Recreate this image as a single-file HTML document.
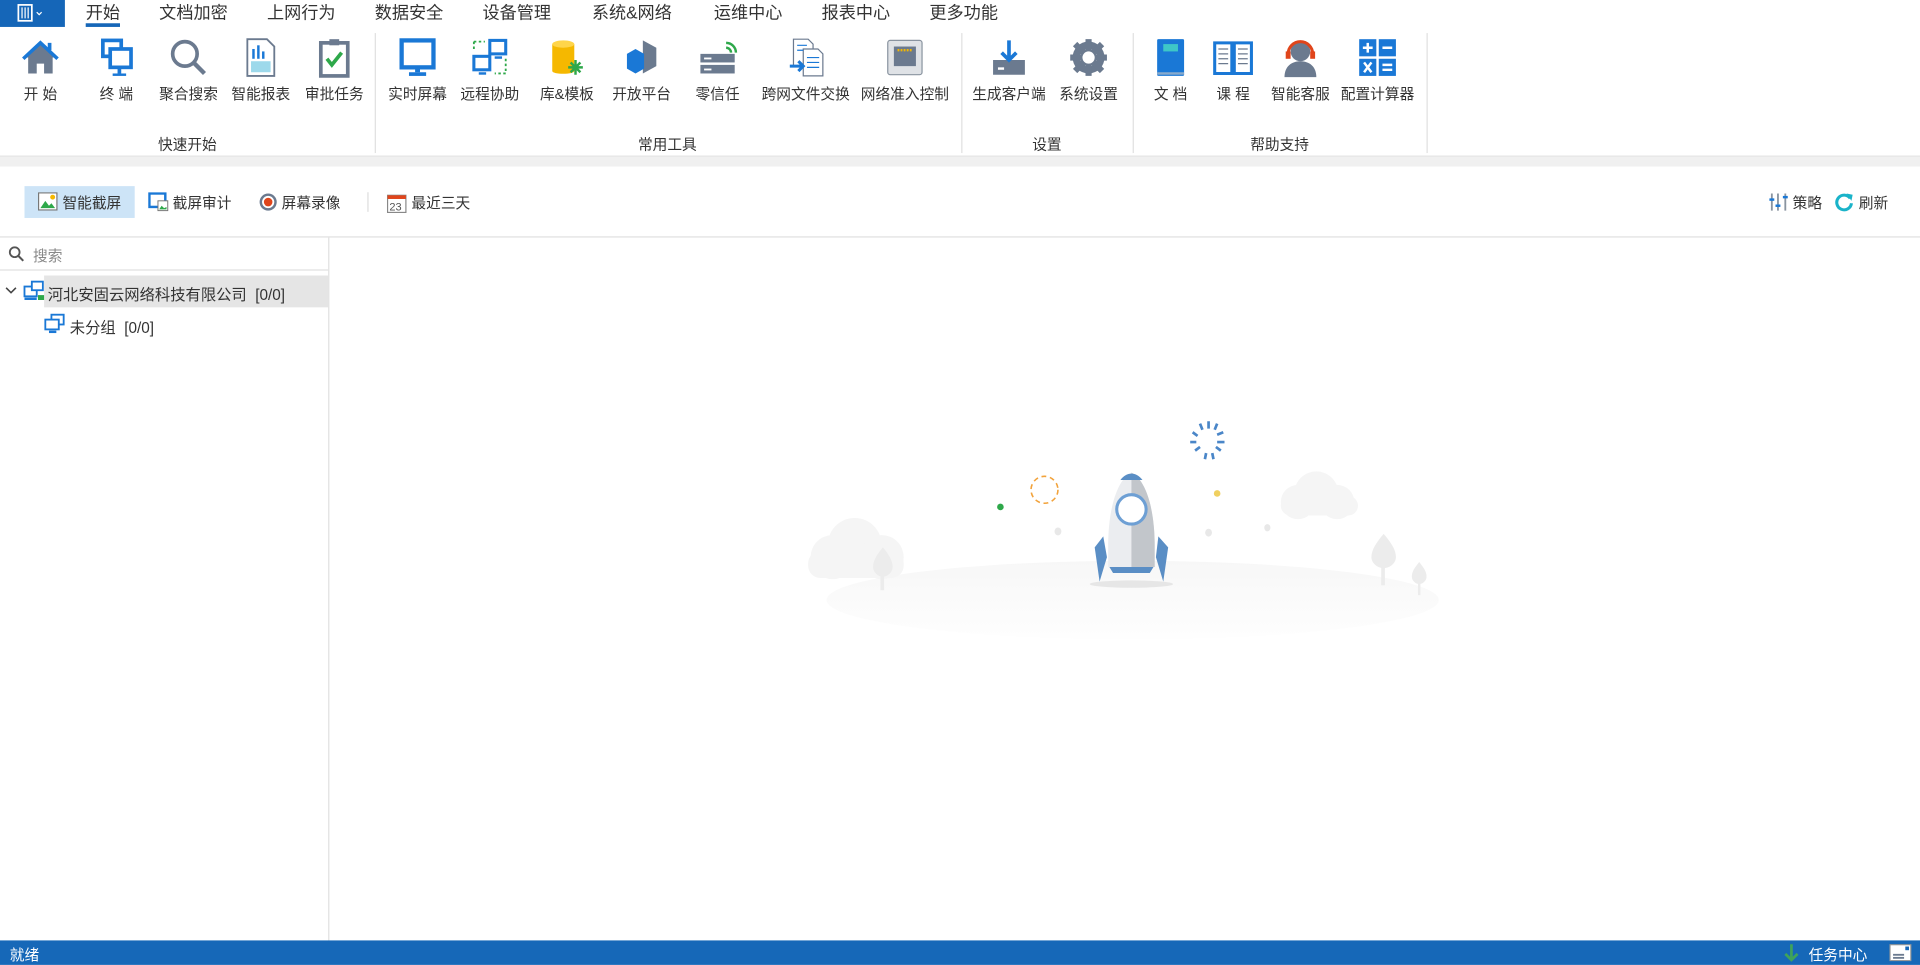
<!DOCTYPE html>
<html><head><meta charset="utf-8">
<style>
*{margin:0;padding:0;box-sizing:border-box}
html,body{width:1920px;height:965px;overflow:hidden;background:#fff}
#w{position:absolute;left:0;top:0;width:1568px;height:788px;transform:scale(1.22449);transform-origin:0 0;font-family:"Liberation Sans","Noto Sans CJK SC",sans-serif;color:#333;font-size:12px}
.a{position:absolute}
.tab{position:absolute;top:0px;font-size:14px;color:#333;transform:translateX(-50%);white-space:nowrap}
.it{position:absolute;top:30px;width:60px;margin-left:-30px;text-align:center}
.it svg{display:block;margin:0 auto;width:34px;height:34px}
.it span{display:block;margin-top:4px;font-size:12px;color:#333;white-space:nowrap}
.gl{position:absolute;top:109px;transform:translateX(-50%);font-size:12px;color:#333}
.sep{position:absolute;top:27px;width:1px;height:98px;background:#e0e0e0}
</style></head><body><div id="w">
<div class="a" style="left:0;top:0;width:53px;height:22px;background:#1566b8"></div>
<svg class="a" style="left:14px;top:3px" width="26" height="16"><rect x="1" y="1" width="11" height="13" fill="none" stroke="#fff" stroke-width="1.4"/><line x1="4" y1="3" x2="4" y2="12" stroke="#fff"/><line x1="6.5" y1="3" x2="6.5" y2="12" stroke="#fff"/><line x1="9" y1="3" x2="9" y2="12" stroke="#fff"/><path d="M16 7l2 2 2-2" stroke="#fff" fill="none"/></svg>
<div class="tab" style="left:84px">开始</div>
<div class="a" style="left:70px;top:19px;width:28px;height:3px;background:#1566b8"></div>
<div class="tab" style="left:158px">文档加密</div>
<div class="tab" style="left:246px">上网行为</div>
<div class="tab" style="left:334px">数据安全</div>
<div class="tab" style="left:422px">设备管理</div>
<div class="tab" style="left:516px">系统&amp;网络</div>
<div class="tab" style="left:611px">运维中心</div>
<div class="tab" style="left:699px">报表中心</div>
<div class="tab" style="left:787px">更多功能</div>

<div class="sep" style="left:306px"></div><div class="sep" style="left:785px"></div><div class="sep" style="left:925px"></div><div class="sep" style="left:1165px"></div>
<div class="it" style="left:33px"><svg viewBox="0 0 34 34"><path d="M17 4L3 17h4v13h7v-8h6v8h7V17h4z" fill="#6b7a8f"/><path d="M17 3L2 17l2 2 13-12 13 12 2-2z" fill="#1a78d6"/><rect x="23" y="5" width="3" height="6" fill="#1a78d6"/></svg><span>开 始</span></div>
<div class="it" style="left:95px"><svg viewBox="0 0 34 34"><rect x="6" y="3" width="15" height="13" fill="none" stroke="#1a78d6" stroke-width="3"/><rect x="12" y="10" width="17" height="15" fill="#fff" stroke="#1a78d6" stroke-width="3"/><rect x="18" y="26" width="3" height="4" fill="#1a78d6"/><rect x="14" y="30" width="11" height="2" fill="#1a78d6"/></svg><span>终 端</span></div>
<div class="it" style="left:154px"><svg viewBox="0 0 34 34"><circle cx="14" cy="14" r="10" fill="none" stroke="#6b7a8f" stroke-width="3"/><path d="M21 21l9 9" stroke="#6b7a8f" stroke-width="3.5"/></svg><span>聚合搜索</span></div>
<div class="it" style="left:213px"><svg viewBox="0 0 34 34"><path d="M6 2h16l6 6v24H6z" fill="#fff" stroke="#6b7a8f" stroke-width="1.5"/><rect x="10" y="10" width="2" height="8" fill="#1a78d6"/><rect x="14" y="7" width="2" height="11" fill="#1a78d6"/><rect x="18" y="12" width="2" height="6" fill="#1a78d6"/><rect x="9" y="20" width="16" height="9" fill="#5bc0de" opacity=".6"/></svg><span>智能报表</span></div>
<div class="it" style="left:273px"><svg viewBox="0 0 34 34"><rect x="6" y="5" width="22" height="27" fill="#fff" stroke="#6b7a8f" stroke-width="3"/><rect x="13" y="2" width="8" height="5" fill="#6b7a8f"/><path d="M11 18l4 5 8-10" fill="none" stroke="#2ea84a" stroke-width="3"/></svg><span>审批任务</span></div>
<div class="it" style="left:341px"><svg viewBox="0 0 34 34"><rect x="4" y="3" width="26" height="22" fill="none" stroke="#1a78d6" stroke-width="3.5"/><rect x="15" y="25" width="4" height="4" fill="#1a78d6"/><rect x="10" y="29" width="14" height="3" fill="#1a78d6"/></svg><span>实时屏幕</span></div>
<div class="it" style="left:400px"><svg viewBox="0 0 34 34"><rect x="17" y="3" width="13" height="11" fill="none" stroke="#1a78d6" stroke-width="2.5"/><rect x="4" y="16" width="13" height="11" fill="none" stroke="#1a78d6" stroke-width="2.5"/><path d="M4 4h9M4 4v8M30 18v12h-9" stroke="#2ea84a" stroke-dasharray="2 2" fill="none" stroke-width="1.5"/><rect x="8" y="29" width="6" height="2" fill="#1a78d6"/><rect x="21" y="16" width="6" height="2" fill="#1a78d6"/></svg><span>远程协助</span></div>
<div class="it" style="left:463px"><svg viewBox="0 0 34 34"><path d="M5 6v22c0 3 18 3 18 0V6z" fill="#f5b800"/><ellipse cx="14" cy="6" rx="9" ry="3" fill="#ffd54a"/><path d="M24 19v12M18 25h12M20 21l8 8M28 21l-8 8" stroke="#2ea84a" stroke-width="2"/></svg><span>库&amp;模板</span></div>
<div class="it" style="left:524px"><svg viewBox="0 0 34 34"><path d="M18 3l11 6v15l-11 6z" fill="#6b7a8f"/><path d="M5 14l7-4 7 4v12l-7 4-7-4z" fill="#1a78d6"/></svg><span>开放平台</span></div>
<div class="it" style="left:586px"><svg viewBox="0 0 34 34"><rect x="3" y="14" width="28" height="7" fill="#6b7a8f"/><rect x="3" y="23" width="28" height="7" fill="#6b7a8f"/><rect x="6" y="17" width="6" height="1.5" fill="#fff"/><rect x="6" y="26" width="6" height="1.5" fill="#fff"/><path d="M24 9a4 4 0 014 4M24 5a8 8 0 018 8" stroke="#2ea84a" stroke-width="2" fill="none"/></svg><span>零信任</span></div>
<div class="it" style="left:658px;width:80px;margin-left:-40px"><svg viewBox="0 0 34 34"><path d="M7 2h12l4 4v18H7z" fill="#fff" stroke="#6b7a8f"/><path d="M15 10h12l4 4v18H15z" fill="#fff" stroke="#6b7a8f"/><path d="M18 17h10M18 21h10M18 25h10M10 7h8M10 11h5" stroke="#1a78d6"/><path d="M4 24h11M11 20l4 4-4 4" stroke="#1a78d6" stroke-width="2.5" fill="none"/></svg><span>跨网文件交换</span></div>
<div class="it" style="left:739px;width:80px;margin-left:-40px"><svg viewBox="0 0 34 34"><rect x="3" y="3" width="28" height="28" rx="2" fill="#dfe2e6" stroke="#8a94a0"/><rect x="8" y="8" width="18" height="16" fill="#6b7a8f"/><path d="M11 11h12" stroke="#f5b800" stroke-width="2" stroke-dasharray="1.5 1"/></svg><span>网络准入控制</span></div>
<div class="it" style="left:824px;width:70px;margin-left:-35px"><svg viewBox="0 0 34 34"><path d="M4 19h26v12H4z" fill="#6b7a8f"/><rect x="8" y="25" width="5" height="2" fill="#fff"/><path d="M17 3v16M11 13l6 6 6-6" stroke="#1a78d6" stroke-width="3" fill="none"/></svg><span>生成客户端</span></div>
<div class="it" style="left:889px"><svg viewBox="0 0 34 34"><circle cx="17" cy="17" r="10" fill="none" stroke="#6b7a8f" stroke-width="6"/><path d="M17 2v30M2 17h30M6 6l22 22M28 6L6 28" stroke="#6b7a8f" stroke-width="5"/><circle cx="17" cy="17" r="5" fill="#fff"/></svg><span>系统设置</span></div>
<div class="it" style="left:956px"><svg viewBox="0 0 34 34"><rect x="6" y="2" width="22" height="30" rx="1" fill="#1a78d6"/><rect x="11" y="6" width="12" height="6" fill="#3ec7c7"/><rect x="6" y="29" width="22" height="2" fill="#8ac"/></svg><span>文 档</span></div>
<div class="it" style="left:1007px"><svg viewBox="0 0 34 34"><path d="M2 5h14v25H2zM18 5h14v25H18z" fill="#fff" stroke="#1a78d6" stroke-width="2.5"/><path d="M5 10h8M5 14h8M5 18h8M5 22h8M21 10h8M21 14h8M21 18h8M21 22h8" stroke="#6b7a8f"/></svg><span>课 程</span></div>
<div class="it" style="left:1062px"><svg viewBox="0 0 34 34"><circle cx="17" cy="12" r="8" fill="#6b7a8f"/><path d="M4 33c0-9 6-13 13-13s13 4 13 13z" fill="#6b7a8f"/><path d="M7 14a10 10 0 0120 0" stroke="#e0451b" stroke-width="2.5" fill="none"/><rect x="5" y="12" width="4" height="6" fill="#e0451b"/><rect x="25" y="12" width="4" height="6" fill="#e0451b"/></svg><span>智能客服</span></div>
<div class="it" style="left:1125px;width:70px;margin-left:-35px"><svg viewBox="0 0 34 34"><rect x="2" y="2" width="14" height="14" fill="#1a78d6"/><rect x="18" y="2" width="14" height="14" fill="#1a78d6"/><rect x="2" y="18" width="14" height="14" fill="#1a78d6"/><rect x="18" y="18" width="14" height="14" fill="#1a78d6"/><path d="M5 9h8M9 5v8M21 9h8M6 21l6 8M12 21l-6 8M21 23h8M21 27h8" stroke="#fff" stroke-width="2"/></svg><span>配置计算器</span></div>
<div class="gl" style="left:153px">快速开始</div>
<div class="gl" style="left:545px">常用工具</div>
<div class="gl" style="left:855px">设置</div>
<div class="gl" style="left:1045px">帮助支持</div>
<div class="a" style="left:0;top:127px;width:1568px;height:9px;background:#f0f0f0;border-top:1px solid #e6e6e6"></div>

<div class="a" style="left:20px;top:152px;width:90px;height:26px;background:#cde4f7"></div>
<svg class="a" style="left:31px;top:157px" width="16" height="15"><rect x=".5" y=".5" width="15" height="14" fill="#fff" stroke="#777"/><path d="M2 13l4-6 3 4 2-2 3 4z" fill="#2ea84a"/><circle cx="12" cy="4" r="2" fill="#f5b800"/></svg>
<div class="a" style="left:51px;top:157px;font-size:12px">智能截屏</div>
<svg class="a" style="left:121px;top:157px" width="17" height="16"><rect x="1" y="1" width="13" height="11" fill="none" stroke="#1a78d6" stroke-width="2"/><rect x="8" y="7" width="8" height="8" fill="#fff" stroke="#777" stroke-width=".8"/><path d="M9 14l2-3 2 2 2-1v2z" fill="#2ea84a"/></svg>
<div class="a" style="left:141px;top:157px">截屏审计</div>
<svg class="a" style="left:211px;top:157px" width="16" height="16"><circle cx="8" cy="8" r="7" fill="#6b7a8f"/><circle cx="8" cy="8" r="5" fill="#fff"/><circle cx="8" cy="8" r="3.5" fill="#e0451b"/></svg>
<div class="a" style="left:230px;top:157px">屏幕录像</div>
<div class="a" style="left:300px;top:157px;width:1px;height:16px;background:#ddd"></div>
<svg class="a" style="left:316px;top:157px" width="16" height="17"><rect x=".5" y="2.5" width="15" height="14" fill="#fff" stroke="#888"/><rect x=".5" y="2.5" width="15" height="3" fill="#e0451b"/><text x="2" y="15" font-size="9" fill="#555" font-family="Liberation Sans">23</text></svg>
<div class="a" style="left:336px;top:157px">最近三天</div>
<svg class="a" style="left:1444px;top:157px" width="17" height="16"><path d="M3 1v14M8 1v14M14 1v14" stroke="#8a94a0" stroke-width="1.5"/><rect x="1" y="5" width="4" height="2" fill="#1a78d6"/><rect x="6" y="10" width="4" height="2" fill="#1a78d6"/><rect x="12" y="3" width="4" height="2" fill="#1a78d6"/></svg>
<div class="a" style="left:1464px;top:157px">策略</div>
<svg class="a" style="left:1498px;top:157px" width="16" height="16"><path d="M13 5A6 6 0 1 0 14 9" stroke="#1ab3c9" stroke-width="2.5" fill="none"/><path d="M10 1l5 1-1 5z" fill="#1ab3c9"/></svg>
<div class="a" style="left:1518px;top:157px">刷新</div>
<div class="a" style="left:0;top:193px;width:1568px;height:1px;background:#e0e0e0"></div>

<div class="a" style="left:268px;top:194px;width:1px;height:574px;background:#e0e0e0"></div>
<svg class="a" style="left:7px;top:201px" width="13" height="13"><circle cx="5" cy="5" r="4" fill="none" stroke="#555" stroke-width="1.5"/><path d="M8 8l4 4" stroke="#555" stroke-width="1.7"/></svg>
<div class="a" style="left:27px;top:200px;color:#888">搜索</div>
<div class="a" style="left:0;top:220px;width:268px;height:1px;background:#e0e0e0"></div>
<div class="a" style="left:36px;top:225px;width:232px;height:26px;background:#e5e5e5"></div>
<svg class="a" style="left:4px;top:234px" width="10" height="8"><path d="M1 1l4 4 4-4" stroke="#444" stroke-width="1.3" fill="none"/></svg>
<svg class="a" style="left:19px;top:229px" width="18" height="17"><rect x="1" y="5" width="10" height="8" fill="#fff" stroke="#1a78d6" stroke-width="1.5"/><rect x="7" y="1" width="9" height="7" fill="#fff" stroke="#1a78d6" stroke-width="1.5"/><rect x="1" y="14" width="10" height="2" fill="#1a78d6"/><rect x="12" y="12" width="5" height="4" fill="#2ea84a"/></svg>
<div class="a" style="left:39px;top:230px;font-size:12.5px">河北安固云网络科技有限公司&nbsp; [0/0]</div>
<svg class="a" style="left:36px;top:256px" width="18" height="17"><rect x="6" y="1" width="10" height="8" fill="#fff" stroke="#1a78d6" stroke-width="1.5"/><rect x="1" y="5" width="11" height="8" fill="#fff" stroke="#1a78d6" stroke-width="1.5"/><rect x="4" y="14" width="6" height="2" fill="#1a78d6"/></svg>
<div class="a" style="left:57px;top:257px;font-size:12.5px">未分组&nbsp; [0/0]</div>

<svg class="a" style="left:640px;top:330px" width="550" height="200" viewBox="640 330 550 200">
<defs><linearGradient id="g" x1="0" y1="0" x2="0" y2="1"><stop offset="0" stop-color="#f7f7f7"/><stop offset="1" stop-color="#fefefe"/></linearGradient></defs>
<ellipse cx="925" cy="490" rx="250" ry="32" fill="url(#g)"/>
<g fill="#f5f5f5"><circle cx="698" cy="445" r="22"/><circle cx="680" cy="455" r="18"/><circle cx="720" cy="455" r="18"/><rect x="660" y="450" width="78" height="22" rx="10"/>
<circle cx="1075" cy="403" r="18"/><circle cx="1060" cy="410" r="14"/><circle cx="1092" cy="410" r="14"/><rect x="1046" y="405" width="63" height="16" rx="8"/></g>
<g fill="#ececec"><path d="M721 447c-6 7-8 12-8 16 0 4 4 8 8 8s8-4 8-8c0-4-2-9-8-16z"/><rect x="719" y="465" width="3" height="17"/>
<path d="M1130 436c-6 7-10 13-10 19 0 5 5 9 10 9s10-4 10-9c0-6-4-12-10-19z"/><rect x="1128" y="460" width="3" height="18"/>
<path d="M1159 459c-4 5-6 8-6 12 0 3 3 6 6 6s6-3 6-6c0-4-2-7-6-12z"/><rect x="1158" y="473" width="2" height="13"/></g>
<ellipse cx="924" cy="477" rx="34" ry="3" fill="#e6e6e6"/>
<path d="M901 438l-7 9 4 28 6-20z" fill="#5a8ec5"/><path d="M946 438l8 9-4 28-6-20z" fill="#5a8ec5"/>
<path d="M924 386c-12 6-19 30-19 60v17h38v-17c0-30-7-54-19-60z" fill="#ebedf0"/>
<path d="M924 386c12 6 19 30 19 60v17h-19z" fill="#c2c6cb"/>
<path d="M915 392c5-7 13-7 18 0z" fill="#5a8ec5"/>
<path d="M906 463h36l-3 5h-30z" fill="#5a8ec5"/>
<circle cx="924" cy="416" r="12" fill="#fff" stroke="#6d9fd4" stroke-width="2.5"/>
<circle cx="853" cy="400" r="11" fill="none" stroke="#f2a33c" stroke-width="1.3" stroke-dasharray="4 3"/>
<circle cx="817" cy="414" r="2.7" fill="#2ea84a"/><circle cx="994" cy="403" r="2.7" fill="#f0d060"/>
<ellipse cx="864" cy="434" rx="2.8" ry="3.2" fill="#e8e8e8"/><ellipse cx="987" cy="435" rx="2.8" ry="3.2" fill="#e8e8e8"/><ellipse cx="1035" cy="431" rx="2.5" ry="3" fill="#e8e8e8"/>
<g stroke="#4a86c8" stroke-width="2.2"><path d="M987 344v6M994 346l-2 5M999 353l-5 2M1000 361h-6M997 368l-4-3M991 375l-1-5M984 375l1-5M976 368l4-3M972 361h5M974 353l4 3M980 346l2 5"/></g>
</svg>

<div class="a" style="left:0;top:768px;width:1568px;height:20px;background:#1668b8"></div>
<div class="a" style="left:8px;top:771px;color:#fff">就绪</div>
<svg class="a" style="left:1456px;top:771px" width="14" height="16"><path d="M7 0v13M2 8l5 5 5-5" stroke="#3fa35a" stroke-width="2.2" fill="none"/></svg>
<div class="a" style="left:1477px;top:771px;color:#fff">任务中心</div>
<svg class="a" style="left:1543px;top:771px" width="18" height="14"><rect x=".5" y=".5" width="17" height="13" fill="#fff" stroke="#999"/><rect x="3" y="8" width="9" height="1.5" fill="#6b7a8f"/><rect x="3" y="10.5" width="9" height="1.5" fill="#6b7a8f"/><rect x="13" y="2" width="3" height="3" fill="#1668b8"/></svg>
</div></body></html>
